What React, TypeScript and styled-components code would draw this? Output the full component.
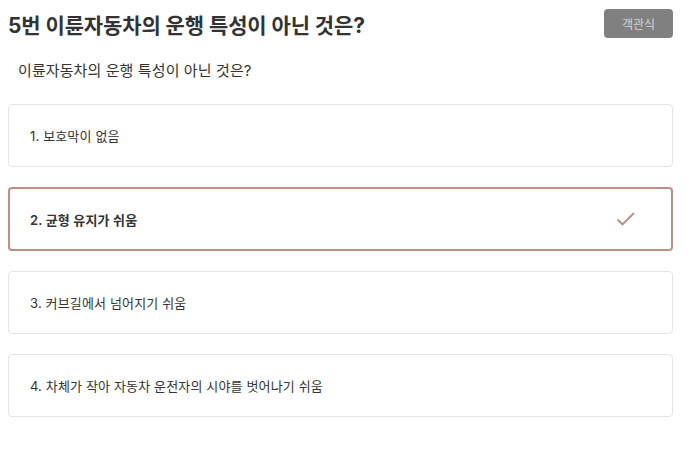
import React from 'react';
import styled, { createGlobalStyle } from 'styled-components';

const GlobalStyle = createGlobalStyle`
  body {
    margin: 0;
    background: #ffffff;
    font-family: Inter, "Noto Sans CJK KR", sans-serif;
  }
`;

const options = [
  '1. 보호막이 없음',
  '2. 균형 유지가 쉬움',
  '3. 커브길에서 넘어지기 쉬움',
  '4. 차체가 작아 자동차 운전자의 시야를 벗어나기 쉬움',
];

const selected = 1;

const App = (): JSX.Element => {
  return (
    <>
      <GlobalStyle />
      <Page>
        <Header>
          <Title>5번 이륜자동차의 운행 특성이 아닌 것은?</Title>
          <Badge>객관식</Badge>
        </Header>
        <Question>이륜자동차의 운행 특성이 아닌 것은?</Question>
        <OptionList>
          {options.map((text, i) => (
            <Option key={text} $active={i === selected}>
              <OptionText $active={i === selected}>{text}</OptionText>
              {i === selected && (
                <svg width="20" height="16" viewBox="0 0 20 16">
                  <path
                    d="M1.5 8.5 L6.5 13.5 L18 2"
                    fill="none"
                    stroke="#b98d7f"
                    strokeWidth="1.8"
                  />
                </svg>
              )}
            </Option>
          ))}
        </OptionList>
      </Page>
    </>
  );
};

const Page = styled.div`
  padding: 9px 18px 0 8px;
`;

const Header = styled.div`
  display: flex;
  align-items: center;
  justify-content: space-between;
  height: 29px;
`;

const Title = styled.h1`
  margin: 0;
  font-size: 21px;
  font-weight: 700;
  color: #333333;
  letter-spacing: -0.1px;
`;

const Badge = styled.div`
  width: 69px;
  height: 29px;
  border-radius: 4px;
  background: #808080;
  color: #d4d4d4;
  font-size: 12px;
  display: flex;
  align-items: center;
  justify-content: center;
`;

const Question = styled.p`
  margin: 20px 0 0 10px;
  font-size: 15px;
  letter-spacing: 0.1px;
  color: #333333;
  line-height: 26px;
`;

const OptionList = styled.div`
  display: flex;
  flex-direction: column;
  gap: 20px;
  margin-top: 20px;
`;

const Option = styled.div<{ $active: boolean }>`
  display: flex;
  align-items: center;
  justify-content: space-between;
  box-sizing: border-box;
  height: ${(p) => (p.$active ? '64px' : '63px')};
  padding: 0 35px 0 20px;
  border: ${(p) => (p.$active ? '2px solid #bf9082' : '1px solid #e4e4e4')};
  padding-left: ${(p) => (p.$active ? '20px' : '21px')};
  border-radius: 4px;
  background: #ffffff;
`;

const OptionText = styled.span<{ $active: boolean }>`
  font-size: 13px;
  letter-spacing: 0.15px;
  color: #333333;
  font-weight: ${(p) => (p.$active ? 600 : 400)};
`;

export default App;
